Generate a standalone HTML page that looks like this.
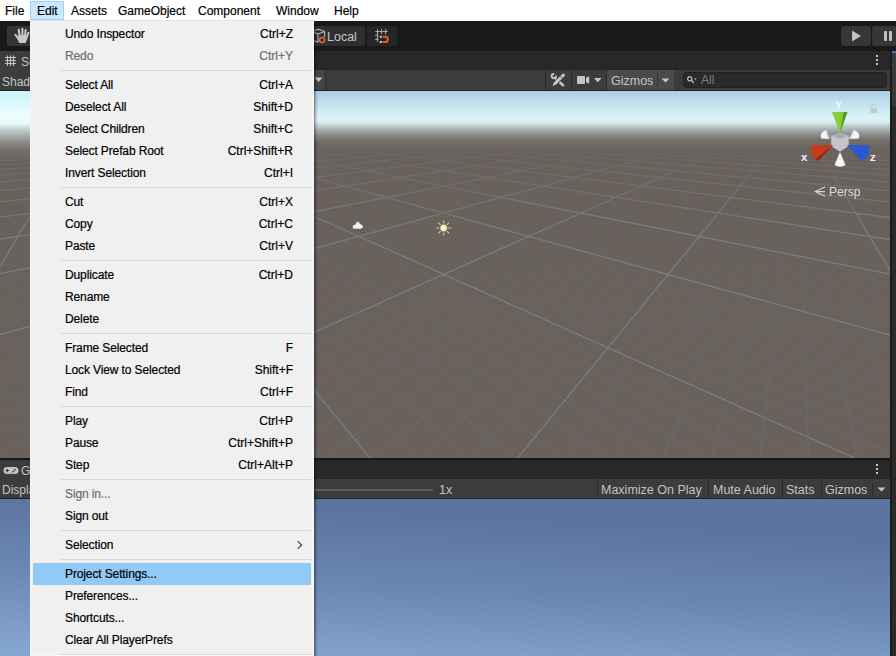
<!DOCTYPE html>
<html><head><meta charset="utf-8">
<style>
*{margin:0;padding:0;box-sizing:border-box}
html,body{width:896px;height:656px;overflow:hidden;background:#191919;font-family:"Liberation Sans",sans-serif;}
.a{position:absolute}
.t{position:absolute;white-space:nowrap;line-height:1}
#menubar{left:0;top:0;width:896px;height:21px;background:#fff}
#menubar .t{font-size:12px;color:#000;top:5px;-webkit-text-stroke:0.2px #000}
#edit{left:30px;top:1px;width:34px;height:19px;background:#cce8ff;border:1px solid #99d1ff}
#toolbar{left:0;top:21px;width:896px;height:30px;background:#191919}
.tbtn{position:absolute;background:#383838;border-radius:3px}
/* scene panel */
#scenetabs{left:0;top:51px;width:890px;height:19px;background:#282828;border-bottom:1px solid #232323}
#scenetool{left:0;top:70px;width:890px;height:21px;background:#3c3c3c;border-bottom:1px solid #232323}
#sceneview{left:0;top:91px;width:890px;height:367px;overflow:hidden;background:#68615c}
#gametabs{left:0;top:460px;width:890px;height:19px;background:#282828}
#gametool{left:0;top:479px;width:890px;height:20px;background:#3c3c3c;border-bottom:1px solid #232323}
#gameview{left:0;top:499px;width:890px;height:157px;background:linear-gradient(183deg,#5c76a2 0%,#5a729c 15%,#6986b2 55%,#88a8d4 100%)}
#rightpanel{left:892px;top:51px;width:4px;height:605px;background:#282828}
.lt{color:#c4c4c4;font-size:12px}
/* menu */
#menu{left:30px;top:20px;width:284px;height:636px;border-bottom:none;background:#f0f0f0;border:1px solid #f6f6f6;border-top-color:#e4e4e4;border-right-width:2px}
#mshadow{left:314px;top:24px;width:4px;height:632px;background:linear-gradient(90deg,rgba(0,0,0,.45),rgba(0,0,0,.15) 50%,rgba(0,0,0,0))}
#mitems .it{position:absolute;left:31px;width:282px;height:22px}
#mitems .it span{position:absolute;top:5px;font-size:12px;line-height:1;white-space:nowrap;color:#000;-webkit-text-stroke:0.2px #000}
#mitems .it span.l{left:34px;letter-spacing:-0.12px}
#mitems .it span.r{right:20px}
#mitems .dis span{color:#6d6d6d;-webkit-text-stroke:0.2px #6d6d6d}
#mitems .sep{position:absolute;left:61px;width:250px;height:1px;background:#d7d7d7}
#mitems .hl{background:#91c9f7;left:33px;width:278px}
#mitems .hl span.l{left:32px}
#mitems .arr{position:absolute;left:264px;top:8px;width:6px;height:6px;border-right:1.2px solid #333;border-top:1.2px solid #333;transform:rotate(45deg)}
</style></head>
<body>
<div id="menubar" class="a">
  <div id="edit" class="a"></div>
  <span class="t" style="left:5px">File</span>
  <span class="t" style="left:37px">Edit</span>
  <span class="t" style="left:71px">Assets</span>
  <span class="t" style="left:118px">GameObject</span>
  <span class="t" style="left:198px">Component</span>
  <span class="t" style="left:276px">Window</span>
  <span class="t" style="left:334px">Help</span>
</div>
<div id="toolbar" class="a">
  <div class="tbtn" style="left:7px;top:5px;width:28px;height:20px;background:#353535;border-radius:2px"></div>
  <svg class="a" style="left:12px;top:5px" width="20" height="20" viewBox="12 26 20 20">
    <path d="M19.2 43 L25.6 43 L27.8 37.5 L27 35 L19 35 L17.2 38.5 Z" fill="#c8c8c8"/>
    <path d="M18.6 38.8 L15.5 34.8 M19.6 36 L18.8 29.8 M22.4 35.5 L22.4 28.8 M25 36 L25.6 30 M26.8 37 L28.4 32.8" stroke="#c8c8c8" stroke-width="2.1" stroke-linecap="round" fill="none"/>
  </svg>
  <div class="tbtn" style="left:290px;top:5px;width:75px;height:20px;background:#2f2f2f"></div>
  <svg class="a" style="left:310px;top:3px" width="20" height="24" viewBox="310 24 20 24">
    <path d="M312 31.5 L318.3 29.3 L324.6 31.5 L318 34 Z M318 34 V42.5 M324.6 31.5 V37 M312 31.5 V39.5 L318 42.5" stroke="#b8b8b8" stroke-width="1.1" fill="none" stroke-linejoin="round"/>
    <circle cx="322.1" cy="39.9" r="2.5" stroke="#e8642c" stroke-width="1.5" fill="#303030"/>
  </svg>
  <span class="t lt" style="left:327px;top:10px;font-size:12.5px;color:#c8c8c8">Local</span>
  <div class="tbtn" style="left:367px;top:5px;width:30px;height:20px;background:#262626"></div>
  <svg class="a" style="left:370px;top:5px" width="22" height="20" viewBox="370 26 22 20">
    <path d="M377.5 29.3 V41.8 M381.5 29.3 V34.3 M385.6 29.3 V34.3 M375.3 31.5 H387.8 M375.3 35.3 H378.5 M375.3 39.4 H378.5" stroke="#a8a8a8" stroke-width="1.1" fill="none"/>
    <rect x="379.8" y="35.8" width="2" height="2" fill="#d0d0d0"/><rect x="379.8" y="41" width="2" height="2" fill="#d0d0d0"/>
    <path d="M382.6 36.8 H385.2 A2.65 2.65 0 0 1 385.2 42.1 H382.6" stroke="#e0602a" stroke-width="2" fill="none"/>
  </svg>
  <div class="tbtn" style="left:841px;top:5px;width:30px;height:20px;background:#363636"></div>
  <svg class="a" style="left:851px;top:9px" width="12" height="12"><path d="M1 0.5 L10 6 L1 11.5 Z" fill="#c2c2c2"/></svg>
  <div class="tbtn" style="left:872px;top:5px;width:24px;height:20px;background:#363636;border-radius:3px 0 0 3px"></div>
  <div class="a" style="left:884px;top:10px;width:3px;height:10px;background:#c2c2c2;border-radius:1px"></div>
  <div class="a" style="left:889px;top:10px;width:3px;height:10px;background:#c2c2c2;border-radius:1px"></div>
</div>
<div id="scenetabs" class="a">
  <div class="a" style="left:0;top:0;width:70px;height:19px;background:#3c3c3c"></div>
  <svg class="a" style="left:5px;top:4px" width="12" height="12" viewBox="5 55 12 12"><path d="M7.5 55.5 V66 M10.5 55.5 V66 M13.5 55.5 V66 M5 57.5 H16 M5 60.5 H16 M5 63.5 H16" stroke="#c4c4c4" stroke-width="1.1" fill="none"/></svg>
  <span class="t lt" style="left:21px;top:5px;font-size:12px">Scene</span>
  <div class="a" style="left:876px;top:4px;width:2px;height:2px;background:#c4c4c4;box-shadow:0 4px 0 #c4c4c4,0 8px 0 #c4c4c4"></div>
</div>
<div id="scenetool" class="a">
  <span class="t lt" style="left:2px;top:6px">Shaded</span>
  <div class="a" style="left:300px;top:0;width:26px;height:20px;background:#464646;border-right:1px solid #2a2a2a"></div>
  <svg class="a" style="left:314px;top:7px" width="10" height="7"><path d="M0.5 0.5 H8.5 L4.5 5 Z" fill="#c4c4c4"/></svg>
  <div class="a" style="left:545px;top:0;width:1px;height:20px;background:#2a2a2a"></div>
  <svg class="a" style="left:544px;top:0px" width="30" height="21" viewBox="544 70 30 21">
    <path d="M555.90 75.65 A2.15 2.15 0 1 1 554.25 74.00" stroke="#c4c4c4" stroke-width="2.1" fill="none"/>
    <path d="M556.3 78.9 L563 85.3" stroke="#c4c4c4" stroke-width="2.6" stroke-linecap="round" fill="none"/>
    <path d="M563.4 75.1 L555.2 83.3" stroke="#3c3c3c" stroke-width="4.6" stroke-linecap="round" fill="none"/>
    <path d="M563.4 75.1 L555.6 82.9" stroke="#c4c4c4" stroke-width="3" stroke-linecap="round" fill="none"/>
    <path d="M554.2 81.8 L556.7 84.3 L552.4 86.1 Z" fill="#c4c4c4"/>
    <path d="M560.4 76.3 L562.2 78.1" stroke="#3c3c3c" stroke-width="0.9"/>
  </svg>
  <div class="a" style="left:571px;top:0;width:1px;height:20px;background:#2a2a2a"></div>
  <div class="a" style="left:577px;top:6px;width:8px;height:8px;background:#c4c4c4;border-radius:1px"></div>
  <svg class="a" style="left:586px;top:6px" width="4" height="8"><path d="M0 2 L3.2 0 V8 L0 6 Z" fill="#c4c4c4"/></svg>
  <svg class="a" style="left:594px;top:8px" width="8" height="5"><path d="M0 0 H7.6 L3.8 4.2 Z" fill="#c4c4c4"/></svg>
  <div class="a" style="left:606px;top:0;width:1px;height:20px;background:#2a2a2a"></div>
  <div class="a" style="left:607px;top:0;width:67px;height:20px;background:#4a4a4a"></div>
  <span class="t lt" style="left:611px;top:5px;font-size:12.5px">Gizmos</span>
  <div class="a" style="left:657px;top:3px;width:1px;height:14px;background:#353535"></div>
  <svg class="a" style="left:661px;top:8px" width="10" height="6"><path d="M0.5 0.5 H8.5 L4.5 4.5 Z" fill="#c4c4c4"/></svg>
  <div class="a" style="left:683px;top:2px;width:204px;height:16px;background:#2a2a2a;border:1px solid #232323;border-radius:4px"></div>
  <svg class="a" style="left:686px;top:5px" width="12" height="10"><circle cx="3.8" cy="3.8" r="2.1" stroke="#c4c4c4" stroke-width="1.2" fill="none"/><path d="M5.3 5.3 L7.8 7.8" stroke="#c4c4c4" stroke-width="1.3"/><path d="M8 3.6 H10.6 L9.3 5 Z" fill="#c4c4c4"/></svg>
  <span class="t" style="left:701px;top:4px;font-size:12px;color:#7e7e7e">All</span>
</div>
<div id="sceneview" class="a">
  <div class="a" style="left:0;top:0;width:890px;height:70px;background:linear-gradient(#abcee4 0px,#c4e4ef 14px,#daf4f6 27px,#d6eef0 31px,#c0ccce 35px,#a2a6a6 40px,#88847f 45px,#746e6b 50px,#6a635f 56px,#68615c 62px)"></div>
  <div class="a" style="left:0;top:0;width:30px;height:70px;background:linear-gradient(#c8f2fa 0px,#dcf9fc 14px,#effeff 26px,#e4f6f8 33px,#c8d8da 37px,#a8b0b0 44px,#8c8a88 52px,#75706c 59px,#6a635f 66px,#68615c 70px)"></div>
  <svg class="a" style="left:0;top:0" width="890" height="367" viewBox="0 0 890 367">
<defs>
<linearGradient id="gm" x1="0" y1="0" x2="0" y2="367" gradientUnits="userSpaceOnUse"><stop offset="0.13" stop-color="#000"/><stop offset="0.2" stop-color="#555"/><stop offset="0.4" stop-color="#fff"/></linearGradient>
<linearGradient id="gn" x1="0" y1="0" x2="0" y2="367" gradientUnits="userSpaceOnUse"><stop offset="0.3" stop-color="#000"/><stop offset="1" stop-color="#fff"/></linearGradient>
<mask id="mm"><rect width="890" height="367" fill="url(#gm)"/></mask>
<mask id="mn"><rect width="890" height="367" fill="url(#gn)"/></mask>
</defs><path mask="url(#mn)" d="M89.9 25.3L-2356 544M797.6 25.3L3243 544M89.9 25.3L-2352 559M797.6 25.3L3240 559M89.9 25.3L-2349 576M797.6 25.3L3236 576M89.9 25.3L-2345 593M797.6 25.3L3232 593M89.9 25.3L-2340 611M797.6 25.3L3228 611M89.9 25.3L-2336 631M797.6 25.3L3223 631M89.9 25.3L-2330 652M797.6 25.3L3218 652M89.9 25.3L-2324 674M797.6 25.3L3212 674M89.9 25.3L-2318 698M797.6 25.3L3205 698M89.9 25.3L-2302 751M797.6 25.3L3190 751M89.9 25.3L-2293 781M797.6 25.3L3181 781M89.9 25.3L-2283 813M797.6 25.3L3170 813M89.9 25.3L-2271 848M797.6 25.3L3158 848M89.9 25.3L-2257 886M797.6 25.3L3145 886M89.9 25.3L-2242 927M797.6 25.3L3129 927M89.9 25.3L-2224 972M797.6 25.3L3111 972M89.9 25.3L-2203 1021M797.6 25.3L3091 1021M89.9 25.3L-2179 1076M797.6 25.3L3066 1076M89.9 25.3L-2116 1201M797.6 25.3L3004 1201M89.9 25.3L-2076 1274M797.6 25.3L2963 1274M89.9 25.3L-2027 1355M797.6 25.3L2915 1355M89.9 25.3L-1968 1444M797.6 25.3L2856 1444M89.9 25.3L-1897 1543M797.6 25.3L2784 1543M89.9 25.3L-1808 1652M797.6 25.3L2696 1652M89.9 25.3L-1699 1771M797.6 25.3L2587 1771M89.9 25.3L-1565 1899M797.6 25.3L2452 1899M89.9 25.3L-1399 2034M797.6 25.3L2286 2034M89.9 25.3L-950 2299M797.6 25.3L1837 2299M89.9 25.3L-662 2409M797.6 25.3L1550 2409M89.9 25.3L-338 2488M797.6 25.3L1225 2488M89.9 25.3L11 2524M797.6 25.3L877 2524M89.9 25.3L364 2510M797.6 25.3L524 2510M89.9 25.3L701 2449M797.6 25.3L187 2449M89.9 25.3L1006 2351M797.6 25.3L-119 2351M89.9 25.3L1271 2229M797.6 25.3L-383 2229M89.9 25.3L1492 2095M797.6 25.3L-605 2095M89.9 25.3L1823 1827M797.6 25.3L-935 1827M89.9 25.3L1942 1704M797.6 25.3L-1055 1704M89.9 25.3L2039 1591M797.6 25.3L-1152 1591M89.9 25.3L2118 1487M797.6 25.3L-1230 1487M89.9 25.3L2182 1394M797.6 25.3L-1295 1394M89.9 25.3L2235 1309M797.6 25.3L-1347 1309M89.9 25.3L2279 1233M797.6 25.3L-1391 1233M89.9 25.3L2315 1164M797.6 25.3L-1428 1164M89.9 25.3L2346 1102M797.6 25.3L-1459 1102M89.9 25.3L2395 994M797.6 25.3L-1507 994M89.9 25.3L2414 947M797.6 25.3L-1526 947M89.9 25.3L2430 904M797.6 25.3L-1543 904M89.9 25.3L2445 865M797.6 25.3L-1557 865M89.9 25.3L2457 828M797.6 25.3L-1570 828M89.9 25.3L2468 795M797.6 25.3L-1581 795M89.9 25.3L2478 764M797.6 25.3L-1591 764M89.9 25.3L2487 736M797.6 25.3L-1599 736M89.9 25.3L2494 709M797.6 25.3L-1607 709M89.9 25.3L2507 662M797.6 25.3L-1620 662M89.9 25.3L2513 640M797.6 25.3L-1626 640M89.9 25.3L2518 620M797.6 25.3L-1631 620M89.9 25.3L2523 601M797.6 25.3L-1635 601M89.9 25.3L2527 583M797.6 25.3L-1639 583M89.9 25.3L2531 567M797.6 25.3L-1643 567M89.9 25.3L2534 551M797.6 25.3L-1646 551M89.9 25.3L2537 536M797.6 25.3L-1650 536M89.9 25.3L2540 522M797.6 25.3L-1653 522M89.9 25.3L2545 496M797.6 25.3L-1658 496M89.9 25.3L2547 484M797.6 25.3L-1660 484M89.9 25.3L2550 472M797.6 25.3L-1662 472M89.9 25.3L2552 461M797.6 25.3L-1664 461M89.9 25.3L2553 451M797.6 25.3L-1666 451M89.9 25.3L2555 441M797.6 25.3L-1668 441M89.9 25.3L2557 432M797.6 25.3L-1669 432M89.9 25.3L2558 423M797.6 25.3L-1671 423M89.9 25.3L2559 414M797.6 25.3L-1672 414M89.9 25.3L2562 398M797.6 25.3L-1674 398M89.9 25.3L2563 390M797.6 25.3L-1676 390M89.9 25.3L2564 383M797.6 25.3L-1677 383M89.9 25.3L2565 376M797.6 25.3L-1678 376M89.9 25.3L2566 369M797.6 25.3L-1679 369M89.9 25.3L2567 363M797.6 25.3L-1680 363M89.9 25.3L2568 356M797.6 25.3L-1680 356M89.9 25.3L2569 350M797.6 25.3L-1681 350M89.9 25.3L2569 344M797.6 25.3L-1682 344M89.9 25.3L2571 333M797.6 25.3L-1683 333M89.9 25.3L2571 328M797.6 25.3L-1684 328M89.9 25.3L2572 323M797.6 25.3L-1685 323M89.9 25.3L2573 318M797.6 25.3L-1685 318M89.9 25.3L2573 313M797.6 25.3L-1686 313M89.9 25.3L2574 309M797.6 25.3L-1686 309M89.9 25.3L2574 304M797.6 25.3L-1687 304M89.9 25.3L2575 300M797.6 25.3L-1687 300M89.9 25.3L2575 296M797.6 25.3L-1688 296" stroke="#716b67" stroke-width="1" fill="none"/><path mask="url(#mm)" d="M89.9 25.3L-2409 87M797.6 25.3L3297 87M89.9 25.3L-2409 90M797.6 25.3L3297 90M89.9 25.3L-2409 92M797.6 25.3L3297 92M89.9 25.3L-2409 95M797.6 25.3L3297 95M89.9 25.3L-2409 97M797.6 25.3L3297 97M89.9 25.3L-2409 100M797.6 25.3L3297 100M89.9 25.3L-2409 104M797.6 25.3L3296 104M89.9 25.3L-2409 108M797.6 25.3L3296 108M89.9 25.3L-2409 112M797.6 25.3L3296 112M89.9 25.3L-2409 116M797.6 25.3L3296 116M89.9 25.3L-2408 121M797.6 25.3L3296 121M89.9 25.3L-2408 126M797.6 25.3L3296 126M89.9 25.3L-2408 132M797.6 25.3L3295 132M89.9 25.3L-2408 139M797.6 25.3L3295 139M89.9 25.3L-2407 147M797.6 25.3L3295 147M89.9 25.3L-2407 156M797.6 25.3L3294 156M89.9 25.3L-2406 167M797.6 25.3L3294 167M89.9 25.3L-2405 179M797.6 25.3L3293 179M89.9 25.3L-2404 194M797.6 25.3L3292 194M89.9 25.3L-2403 212M797.6 25.3L3291 212M89.9 25.3L-2401 234M797.6 25.3L3289 234M89.9 25.3L-2399 262M797.6 25.3L3286 262M89.9 25.3L-2395 298M797.6 25.3L3283 298M89.9 25.3L-2389 348M797.6 25.3L3277 348M89.9 25.3L-2379 419M797.6 25.3L3266 419M89.9 25.3L-2359 530M797.6 25.3L3246 530M89.9 25.3L-2311 724M797.6 25.3L3198 724M89.9 25.3L-2150 1135M797.6 25.3L3038 1135M89.9 25.3L-1195 2170M797.6 25.3L2083 2170M89.9 25.3L1675 1959M797.6 25.3L-787 1959M89.9 25.3L2372 1045M797.6 25.3L-1485 1045M89.9 25.3L2501 685M797.6 25.3L-1614 685M89.9 25.3L2543 509M797.6 25.3L-1655 509M89.9 25.3L2561 406M797.6 25.3L-1673 406M89.9 25.3L2570 339M797.6 25.3L-1683 339M89.9 25.3L2576 292M797.6 25.3L-1688 292M89.9 25.3L2579 257M797.6 25.3L-1692 257M89.9 25.3L2581 230M797.6 25.3L-1694 230M89.9 25.3L2583 209M797.6 25.3L-1696 209M89.9 25.3L2584 192M797.6 25.3L-1697 192M89.9 25.3L2585 177M797.6 25.3L-1698 177M89.9 25.3L2586 165M797.6 25.3L-1698 165M89.9 25.3L2586 155M797.6 25.3L-1699 155M89.9 25.3L2587 146M797.6 25.3L-1699 146M89.9 25.3L2587 138M797.6 25.3L-1700 138M89.9 25.3L2588 131M797.6 25.3L-1700 131M89.9 25.3L2588 125M797.6 25.3L-1700 125M89.9 25.3L2588 120M797.6 25.3L-1701 120M89.9 25.3L2588 115M797.6 25.3L-1701 115M89.9 25.3L2588 111M797.6 25.3L-1701 111M89.9 25.3L2589 107M797.6 25.3L-1701 107M89.9 25.3L2589 103M797.6 25.3L-1701 103M89.9 25.3L2589 100M797.6 25.3L-1701 100M89.9 25.3L2589 97M797.6 25.3L-1701 97M89.9 25.3L2589 94M797.6 25.3L-1701 94M89.9 25.3L2589 92M797.6 25.3L-1701 92M89.9 25.3L2589 89M797.6 25.3L-1702 89M89.9 25.3L2589 87M797.6 25.3L-1702 87M89.9 25.3L2589 85M797.6 25.3L-1702 85M89.9 25.3L2589 83M797.6 25.3L-1702 83M89.9 25.3L2589 81M797.6 25.3L-1702 81" stroke="#827d79" stroke-width="1.25" fill="none"/></svg>
  <svg class="a" style="left:350px;top:128px" width="16" height="12" viewBox="350 219 16 12"><path d="M353.5 228.8 Q352 227.5 353 225.5 Q354.5 224.5 355.5 224.8 Q355.8 222 358 221.8 Q359.6 222 359.8 224 Q362.8 224.5 363 226.8 Q362.5 228.8 360.5 228.8 Z" fill="#f4f4f4"/></svg>
  <svg class="a" style="left:434px;top:127px" width="20" height="20" viewBox="434 218 20 20">
    <g stroke="#d2c6a6" stroke-width="1.1"><path d="M443.7 220.5 V223.5 M443.7 232.5 V235.5 M436.2 228 H439.2 M448.2 228 H451.2 M438.4 222.7 L440.5 224.8 M446.9 231.2 L449 233.3 M438.4 233.3 L440.5 231.2 M446.9 224.8 L449 222.7"/></g>
    <circle cx="443.7" cy="228" r="3.6" fill="#fff0c8" stroke="#9a8a6a" stroke-width="0.7"/>
  </svg>
  <!-- gizmo -->
  <svg class="a" style="left:796px;top:3px" width="94" height="80" viewBox="796 94 94 80">
    <text x="835.5" y="106.5" font-family="Liberation Sans" font-size="11.5" font-weight="bold" fill="#f4f4f4">y</text>
    <text x="801" y="160.5" font-family="Liberation Sans" font-size="11.5" font-weight="bold" fill="#f4f4f4">x</text>
    <text x="870" y="160.5" font-family="Liberation Sans" font-size="11.5" font-weight="bold" fill="#f4f4f4">z</text>
    <path d="M870.5 108 h6.5 v5 h-6.5 z" fill="#c8c8c8"/>
    <path d="M871.8 108 v-2 a2 2 0 0 1 4 0" stroke="#c8c8c8" stroke-width="1.2" fill="none"/>
    <path d="M821.5 138.5 Q818.5 133 826 130 L831.5 139 Z" fill="#f4f4f4"/>
    <path d="M826 130 L831.5 139 L829 139 Z" fill="#9a9a9a"/>
    <path d="M858.5 138.5 Q861.5 133 854 130 L848.5 139 Z" fill="#f4f4f4"/>
    <path d="M854 130 L848.5 139 L851 139 Z" fill="#c8c8c8"/>
    <path d="M840 152 L845.5 165 Q840 168.5 834.5 165 Z" fill="#f6f6f6"/>
    <path d="M831.2 135.5 L840 133 L848.7 135.5 L848.7 146 L840 151.7 L831.2 146 Z" fill="#c4c4ca"/>
    <path d="M831.2 135.5 L840 133 L848.7 135.5 L840 139 Z" fill="#aaaab2"/>
    <path d="M832 112 L847.5 112 L840 133 Z" fill="#86cc3c"/>
    <path d="M843.5 112 L847.5 112 L840 133 Z" fill="#5a9a26"/>
    <path d="M810.5 145.5 L833 145 L818 161 Q811 158 810.5 145.5 Z" fill="#c83a1c"/>
    <path d="M833 145 L818 161 L815.5 159 Z" fill="#8a2814"/>
    <path d="M869.5 145.5 L847 145 L862 161 Q869 158 869.5 145.5 Z" fill="#2a58d8"/>
    <path d="M847 145 L862 161 L859.5 158.5 Z" fill="#16308a"/>
  </svg>
  <svg class="a" style="left:813px;top:94px" width="14" height="12" viewBox="813 185 14 12"><path d="M825 186.9 L815.3 191.6 L825 196.3 M815.3 191.6 H825" stroke="#d6d6d6" stroke-width="1.1" fill="none"/></svg>
  <span class="t" style="left:829px;top:95px;font-size:12px;color:#dcdcdc">Persp</span>
</div>
<div class="a" style="left:890px;top:51px;width:2px;height:605px;background:#1c1c1c"></div>
<div id="gametabs" class="a">
  <div class="a" style="left:0;top:0;width:70px;height:19px;background:#3c3c3c"></div>
  <svg class="a" style="left:3px;top:6px" width="16" height="10" viewBox="3 466 16 10"><path d="M7 467 H15 A3.5 3.5 0 0 1 15 474 H13 Q11 472.8 9 474 H7 A3.5 3.5 0 0 1 7 467 Z" fill="#c4c4c4"/><path d="M5.6 470.5 H9 M7.3 468.8 V472.2" stroke="#333" stroke-width="1.1"/><circle cx="13.2" cy="471.6" r="0.9" fill="#333"/><circle cx="14.9" cy="469.8" r="0.9" fill="#333"/></svg>
  <span class="t lt" style="left:21px;top:5px">Game</span>
  <div class="a" style="left:876px;top:4px;width:2px;height:2px;background:#c4c4c4;box-shadow:0 4px 0 #c4c4c4,0 8px 0 #c4c4c4"></div>
</div>
<div id="gametool" class="a">
  <span class="t lt" style="left:2px;top:5px">Display 1</span>
  <div class="a" style="left:300px;top:10px;width:133px;height:2px;background:#5e5e5e"></div>
  <span class="t lt" style="left:439px;top:5px;font-size:12.5px">1x</span>
  <div class="a" style="left:597px;top:0;width:1px;height:20px;background:#2a2a2a"></div>
  <span class="t lt" style="left:601px;top:5px;font-size:12.5px">Maximize On Play</span>
  <div class="a" style="left:708px;top:0;width:1px;height:20px;background:#2a2a2a"></div>
  <span class="t lt" style="left:713px;top:5px;font-size:12.5px">Mute Audio</span>
  <div class="a" style="left:782px;top:0;width:1px;height:20px;background:#2a2a2a"></div>
  <span class="t lt" style="left:786px;top:5px;font-size:12.5px">Stats</span>
  <div class="a" style="left:821px;top:0;width:1px;height:20px;background:#2a2a2a"></div>
  <span class="t lt" style="left:825px;top:5px;font-size:12.5px">Gizmos</span>
  <div class="a" style="left:872px;top:3px;width:1px;height:14px;background:#2a2a2a"></div>
  <svg class="a" style="left:877px;top:8px" width="10" height="6"><path d="M0.5 0.5 H8.5 L4.5 4.5 Z" fill="#c4c4c4"/></svg>
</div>
<div id="gameview" class="a"></div>
<div id="rightpanel" class="a"></div>
<div class="a" style="left:892px;top:51px;width:4px;height:2px;background:#3a79bb"></div>
<div class="a" style="left:892px;top:53px;width:4px;height:603px;background:#2b2b2b"></div>
<div class="a" style="left:892px;top:53px;width:4px;height:53px;background:#3a3a3a"></div>

<div id="menu" class="a"></div>
<div id="mshadow" class="a"></div>
<div id="mitems">
<div class="it" style="top:23px"><span class="l">Undo Inspector</span><span class="r">Ctrl+Z</span></div>
<div class="it dis" style="top:45px"><span class="l">Redo</span><span class="r">Ctrl+Y</span></div>
<div class="sep" style="top:70px"></div>
<div class="it" style="top:74px"><span class="l">Select All</span><span class="r">Ctrl+A</span></div>
<div class="it" style="top:96px"><span class="l">Deselect All</span><span class="r">Shift+D</span></div>
<div class="it" style="top:118px"><span class="l">Select Children</span><span class="r">Shift+C</span></div>
<div class="it" style="top:140px"><span class="l">Select Prefab Root</span><span class="r">Ctrl+Shift+R</span></div>
<div class="it" style="top:162px"><span class="l">Invert Selection</span><span class="r">Ctrl+I</span></div>
<div class="sep" style="top:187px"></div>
<div class="it" style="top:191px"><span class="l">Cut</span><span class="r">Ctrl+X</span></div>
<div class="it" style="top:213px"><span class="l">Copy</span><span class="r">Ctrl+C</span></div>
<div class="it" style="top:235px"><span class="l">Paste</span><span class="r">Ctrl+V</span></div>
<div class="sep" style="top:260px"></div>
<div class="it" style="top:264px"><span class="l">Duplicate</span><span class="r">Ctrl+D</span></div>
<div class="it" style="top:286px"><span class="l">Rename</span></div>
<div class="it" style="top:308px"><span class="l">Delete</span></div>
<div class="sep" style="top:333px"></div>
<div class="it" style="top:337px"><span class="l">Frame Selected</span><span class="r">F</span></div>
<div class="it" style="top:359px"><span class="l">Lock View to Selected</span><span class="r">Shift+F</span></div>
<div class="it" style="top:381px"><span class="l">Find</span><span class="r">Ctrl+F</span></div>
<div class="sep" style="top:406px"></div>
<div class="it" style="top:410px"><span class="l">Play</span><span class="r">Ctrl+P</span></div>
<div class="it" style="top:432px"><span class="l">Pause</span><span class="r">Ctrl+Shift+P</span></div>
<div class="it" style="top:454px"><span class="l">Step</span><span class="r">Ctrl+Alt+P</span></div>
<div class="sep" style="top:479px"></div>
<div class="it dis" style="top:483px"><span class="l">Sign in...</span></div>
<div class="it" style="top:505px"><span class="l">Sign out</span></div>
<div class="sep" style="top:530px"></div>
<div class="it" style="top:534px"><span class="l">Selection</span><i class="arr"></i></div>
<div class="sep" style="top:559px"></div>
<div class="it hl" style="top:563px"><span class="l">Project Settings...</span></div>
<div class="it" style="top:585px"><span class="l">Preferences...</span></div>
<div class="it" style="top:607px"><span class="l">Shortcuts...</span></div>
<div class="it" style="top:629px"><span class="l">Clear All PlayerPrefs</span></div>
<div class="sep" style="top:654px"></div>

</div>
</body></html>
